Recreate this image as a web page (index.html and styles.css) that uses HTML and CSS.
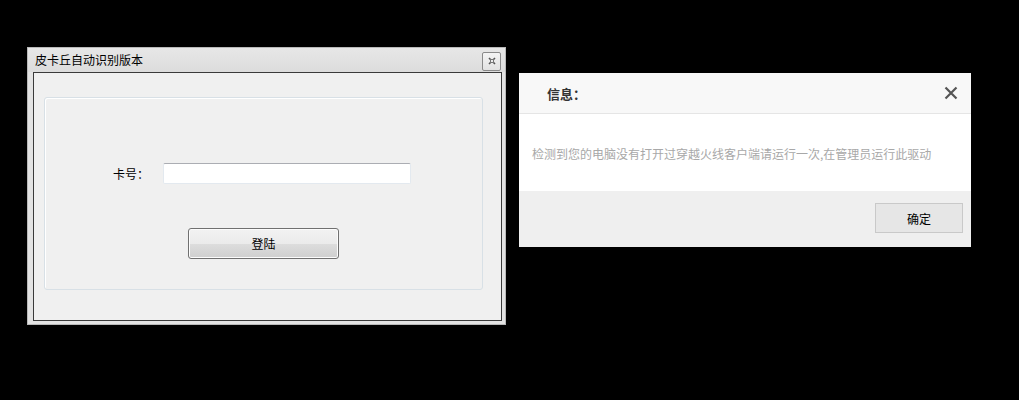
FILE: index.html
```html
<!DOCTYPE html>
<html lang="zh-CN">
<head>
<meta charset="utf-8">
<title>皮卡丘自动识别版本</title>
<link rel="stylesheet" href="styles.css">
</head>
<body>
<div class="desktop">
  <div class="win">
    <div class="win-title">
      <span class="win-title-text">皮卡丘自动识别版本</span>
      <button class="win-close" aria-label="关闭">
        <svg width="8" height="8" viewBox="0 0 8 8"><path d="M1 1 L3 3 M5 3 L7 1 M1 7 L3 5 M5 5 L7 7" stroke="#555" stroke-width="1.6" fill="none"/><rect x="2.5" y="2.5" width="3" height="3" fill="none" stroke="#777" stroke-width="1"/></svg>
      </button>
    </div>
    <div class="win-client">
      <div class="group">
        <div class="field-row">
          <label class="field-label">卡号：</label>
          <input class="field-input" type="text">
        </div>
        <div class="btn-row">
          <button class="win-btn">登陆</button>
        </div>
      </div>
    </div>
  </div>

  <div class="dlg">
    <div class="dlg-head">
      <span class="dlg-title">信息：</span>
      <span class="dlg-close">
        <svg width="14" height="14" viewBox="0 0 14 14"><path d="M1.5 1.5 L12.5 12.5 M12.5 1.5 L1.5 12.5" stroke="#555" stroke-width="2.2" fill="none"/></svg>
      </span>
    </div>
    <div class="dlg-body">检测到您的电脑没有打开过穿越火线客户端请运行一次,在管理员运行此驱动</div>
    <div class="dlg-foot">
      <button class="dlg-btn">确定</button>
    </div>
  </div>
</div>
</body>
</html>
```
FILE: styles.css
```css
html, body {
  margin: 0;
  padding: 0;
  background: #000;
}
body {
  font-family: "Noto Sans CJK SC", "Liberation Sans", sans-serif;
  font-size: 12px;
}
.desktop {
  position: relative;
  width: 1019px;
  height: 400px;
  background: #000;
}

/* left window */
.win {
  position: absolute;
  left: 27px;
  top: 47px;
  width: 479px;
  height: 278px;
  box-sizing: border-box;
  border: 1px solid #b9b9b9;
  background: #e3e3e3;
  padding: 0 3px 3px 5px;
  display: flex;
  flex-direction: column;
}
.win-title {
  height: 24px;
  display: flex;
  align-items: center;
  justify-content: space-between;
  background: linear-gradient(#e7e7e7, #dcdcdc);
  margin: 0 -3px 0 -5px;
  padding: 0 3px 0 7px;
}
.win-title-text {
  color: #000;
  font-size: 12px;
  line-height: 24px;
}
.win-close {
  width: 19px;
  height: 19px;
  box-sizing: border-box;
  border: 1px solid #8a8a8a;
  border-radius: 2px;
  background: linear-gradient(#f4f4f4, #e2e2e2);
  padding: 0;
  margin-top: 2px;
  margin-right: 1px;
  display: flex;
  align-items: center;
  justify-content: center;
}
.win-close svg { display: block; }
.win-client {
  flex: 1;
  border: 1px solid #3a3a3a;
  background: #f0f0f0;
  padding: 24px 18px 30px 10px;
  display: flex;
}
.group {
  flex: 1;
  border: 1px solid #d8e0e6;
  border-radius: 3px;
  box-shadow: inset 1px 1px 0 #fff;
  padding-top: 65px;
  box-sizing: border-box;
}
.field-row {
  display: flex;
  align-items: center;
  padding-left: 68px;
}
.field-label {
  width: 50px;
  color: #000;
  font-size: 12px;
}
.field-input {
  width: 248px;
  height: 21px;
  box-sizing: border-box;
  border: 1px solid #e3e9ef;
  border-top-color: #abadb3;
  border-radius: 2px;
  background: #fff;
  margin: 0;
  padding: 0 3px;
}
.btn-row {
  padding-left: 143px;
  margin-top: 44px;
}
.win-btn {
  width: 151px;
  height: 31px;
  box-sizing: border-box;
  border: 1px solid #707070;
  border-radius: 3px;
  background: linear-gradient(#f2f2f2 0%, #ebebeb 50%, #dddddd 51%, #cfcfcf 100%);
  box-shadow: inset 0 0 0 1px #fcfcfc;
  font-family: "Noto Sans CJK SC", sans-serif;
  font-size: 12px;
  color: #000;
  padding: 0;
}

/* right dialog */
.dlg {
  position: absolute;
  left: 519px;
  top: 73px;
  width: 452px;
  height: 174px;
  background: #fff;
  display: flex;
  flex-direction: column;
}
.dlg-head {
  height: 40px;
  background: #f8f8f8;
  border-bottom: 1px solid #e5e5e5;
  display: flex;
  align-items: center;
  justify-content: space-between;
  padding: 0 13px 0 28px;
}
.dlg-title {
  font-size: 13px;
  font-weight: bold;
  color: #333;
}
.dlg-close {
  display: flex;
  width: 14px;
  height: 14px;
}
.dlg-body {
  height: 77px;
  display: flex;
  align-items: center;
  padding-left: 13px;
  padding-top: 2px;
  box-sizing: border-box;
  color: #a8a8a8;
  font-size: 12px;
  background: #fff;
}
.dlg-foot {
  flex: 1;
  background: #efefef;
  display: flex;
  justify-content: flex-end;
  align-items: flex-start;
  padding: 12px 8px 0 0;
}
.dlg-btn {
  width: 88px;
  height: 30px;
  box-sizing: border-box;
  border: 1px solid #c9c9c9;
  background: #e6e6e6;
  font-family: "Noto Sans CJK SC", sans-serif;
  font-size: 12px;
  color: #000;
  padding: 0;
}
```
